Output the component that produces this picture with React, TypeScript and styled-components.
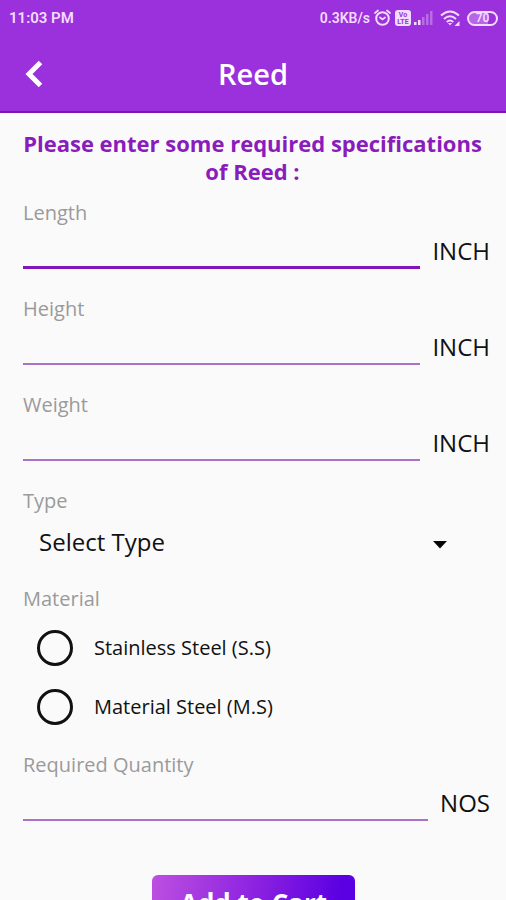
import React, { useId, useState } from "react";
import styled, { createGlobalStyle } from "styled-components";

const GlobalStyle = createGlobalStyle`
  *, *::before, *::after { box-sizing: border-box; }
  body { margin: 0; background: #fafafa; font-family: "Open Sans", "Noto Sans", sans-serif; }
  button, input, select { font: inherit; }
`;

const Screen = styled.div`
  height: 100vh;
  display: flex;
  flex-direction: column;
  overflow: hidden;
  background: #fafafa;
  color: #111;
`;

const Header = styled.header`
  flex: none;
  background: #9b30dd;
  border-bottom: 2px solid #7d12b8;
  color: #fff;
`;

const StatusBar = styled.div`
  height: 36px;
  padding: 0 8px 0 9px;
  display: flex;
  align-items: center;
  justify-content: space-between;
  font-family: Roboto, sans-serif;
  font-size: 15px;
  font-weight: 600;
  color: #f3dcfd;
`;

const StatusIcons = styled.div`
  display: flex;
  align-items: center;
  gap: 4px;
  font-size: 14px;
  svg { display: block; }
`;

const SignalGroup = styled.div`
  display: flex;
  align-items: center;
  gap: 3px;
  margin-right: 3px;
`;

const Battery = styled.span`
  width: 31px;
  height: 15px;
  margin-left: 3px;
  border: 2px solid currentColor;
  border-radius: 8px;
  background: linear-gradient(90deg, #b766e8 70%, transparent 70%);
  font-size: 12px;
  line-height: 11px;
  text-align: center;
`;

const AppBar = styled.div`
  height: 75px;
  display: grid;
  grid-template-columns: 68px 1fr 68px;
  align-items: center;
`;

const BackButton = styled.button`
  height: 48px;
  padding: 0;
  border: 0;
  background: none;
  color: inherit;
  display: flex;
  align-items: center;
  justify-content: center;
`;

const Title = styled.h1`
  margin: 0;
  font-size: 29px;
  line-height: 38px;
  font-weight: 600;
  text-align: center;
`;

const Form = styled.form`
  flex: 1;
  min-height: 0;
  padding: 16px 16px 24px 23px;
  display: flex;
  flex-direction: column;
  overflow-y: auto;
  scrollbar-width: none;
`;

const Intro = styled.h2`
  margin: 0 8px 16px 0;
  font-size: 22px;
  line-height: 28px;
  font-weight: 700;
  text-align: center;
  color: #8a1cbc;
`;

const Field = styled.div`
  flex: none;
  display: flex;
  flex-direction: column;
  margin-bottom: 28px;
`;

const Label = styled.label`
  font-size: 20px;
  line-height: 24px;
  color: #9a9a9a;
`;

const InputRow = styled.div`
  display: flex;
  gap: 12px;
`;

const LineInput = styled.input<{ $active?: boolean }>`
  flex: 1;
  min-width: 0;
  height: 44px;
  padding: 8px 0 4px;
  border: 0;
  border-bottom: ${(p) => (p.$active ? "3px solid #8413b8" : "2px solid #aa72c6")};
  border-radius: 0;
  outline: 0;
  background: transparent;
  color: inherit;
  font-size: 24px;
`;

const Unit = styled.span`
  padding-top: 10px;
  font-size: 24px;
  line-height: 32px;
`;

const SelectBox = styled.div`
  display: grid;
  align-items: center;
  margin: 10px 43px 0 0;
  > * { grid-area: 1 / 1; }
  svg { justify-self: end; margin-top: 8px; pointer-events: none; }
`;

const Select = styled.select`
  width: 100%;
  height: 36px;
  padding: 0 32px 0 16px;
  border: 0;
  outline: 0;
  appearance: none;
  background: transparent;
  color: inherit;
  font-size: 24px;
`;

const Group = styled.fieldset`
  flex: none;
  min-width: 0;
  margin: 0 0 17px;
  padding: 0;
  border: 0;
`;

const Legend = styled.legend`
  padding: 0;
  margin-bottom: 7px;
  font-size: 20px;
  line-height: 24px;
  color: #9a9a9a;
`;

const RadioRow = styled.label`
  height: 59px;
  padding-left: 14px;
  display: flex;
  align-items: center;
  gap: 21px;
  font-size: 20px;
`;

const Radio = styled.input`
  appearance: none;
  width: 36px;
  height: 36px;
  margin: 0;
  border: 3px solid #111;
  border-radius: 50%;
  &:checked { background: radial-gradient(#8413b8 45%, transparent 50%); }
`;

const SubmitButton = styled.button`
  flex: none;
  align-self: center;
  width: 203px;
  height: 56px;
  margin: 26px 6px 0 0;
  border: 0;
  border-radius: 6px;
  background: linear-gradient(100deg, #bd50e0, #8c22e0 50%, #5b00e2 90%);
  color: #fff;
  font-size: 26px;
  font-weight: 700;
`;

const AlarmIcon = () => (
  <svg width="17" height="18" viewBox="0 0 17 18" fill="none" stroke="currentColor" strokeWidth="2" strokeLinecap="round">
    <circle cx="8.5" cy="9.5" r="6.3" />
    <path d="M1 4 4 1.5M16 4 13 1.5M6 8.5l2.5 2 2.5-2" strokeWidth="1.7" />
  </svg>
);

const VolteText = styled.text`
  font: 700 7px Roboto, sans-serif;
  fill: #9b30dd;
`;

const VolteIcon = () => (
  <svg width="16" height="16" viewBox="0 0 16 16">
    <rect width="16" height="16" rx="3" fill="currentColor" />
    <VolteText x="8" y="7" textAnchor="middle">Vo</VolteText>
    <VolteText x="8" y="14" textAnchor="middle">LTE</VolteText>
  </svg>
);

const SignalIcon = () => (
  <svg width="19" height="14" viewBox="0 0 19 14" fill="currentColor">
    <path d="M0 11h2.5v3H0zM4 9h2.5v5H4z" />
    <path d="M8 6h2.5v8H8zM12 3h2.5v11H12zM16 0h2.5v14H16z" opacity="0.35" />
  </svg>
);

const WifiIcon = () => (
  <svg width="20" height="16" viewBox="0 0 20 16" fill="none" stroke="currentColor" strokeWidth="2">
    <path d="M1 5.5q9-8 18 0M4 9q6-5.5 12 0M6.8 12q3.2-3 6.4 0" />
    <path d="m8 13 2 2.5 2-2.5z" fill="currentColor" stroke="none" />
    <path d="M19.5 11v5h-5z" fill="currentColor" stroke="none" />
  </svg>
);

const BackIcon = () => (
  <svg width="18" height="28" viewBox="0 0 18 28" fill="none" stroke="currentColor" strokeWidth="5">
    <path d="M15.5 2.5 4 14l11.5 11.5" />
  </svg>
);

const CaretIcon = () => (
  <svg width="14" height="8" viewBox="0 0 14 8" aria-hidden="true">
    <path d="M0 0h14L7 7.5z" fill="#050505" />
  </svg>
);

function MeasureField({ label, unit, active }: { label: string; unit: string; active?: boolean }) {
  const id = useId();
  return (
    <Field>
      <Label htmlFor={id}>{label}</Label>
      <InputRow>
        <LineInput id={id} inputMode="decimal" $active={active} />
        <Unit>{unit}</Unit>
      </InputRow>
    </Field>
  );
}

const materials = ["Stainless Steel (S.S)", "Material Steel (M.S)"];

export default function App() {
  const [material, setMaterial] = useState("");
  return (
    <Screen>
      <GlobalStyle />
      <Header>
        <StatusBar>
          <span>11:03 PM</span>
          <StatusIcons>
            <span>0.3KB/s</span>
            <AlarmIcon />
            <SignalGroup>
              <VolteIcon />
              <SignalIcon />
            </SignalGroup>
            <WifiIcon />
            <Battery>70</Battery>
          </StatusIcons>
        </StatusBar>
        <AppBar>
          <BackButton type="button" aria-label="Back"><BackIcon /></BackButton>
          <Title>Reed</Title>
        </AppBar>
      </Header>
      <Form onSubmit={(e) => e.preventDefault()}>
        <Intro>Please enter some required specifications of Reed :</Intro>
        <MeasureField label="Length" unit="INCH" active />
        <MeasureField label="Height" unit="INCH" />
        <MeasureField label="Weight" unit="INCH" />
        <Field>
          <Label htmlFor="type">Type</Label>
          <SelectBox>
            <Select id="type" defaultValue="">
              <option value="">Select Type</option>
            </Select>
            <CaretIcon />
          </SelectBox>
        </Field>
        <Group>
          <Legend>Material</Legend>
          {materials.map((name) => (
            <RadioRow key={name}>
              <Radio type="radio" name="material" checked={material === name} onChange={() => setMaterial(name)} />
              {name}
            </RadioRow>
          ))}
        </Group>
        <MeasureField label="Required Quantity" unit="NOS" />
        <SubmitButton type="submit">Add to Cart</SubmitButton>
      </Form>
    </Screen>
  );
}
